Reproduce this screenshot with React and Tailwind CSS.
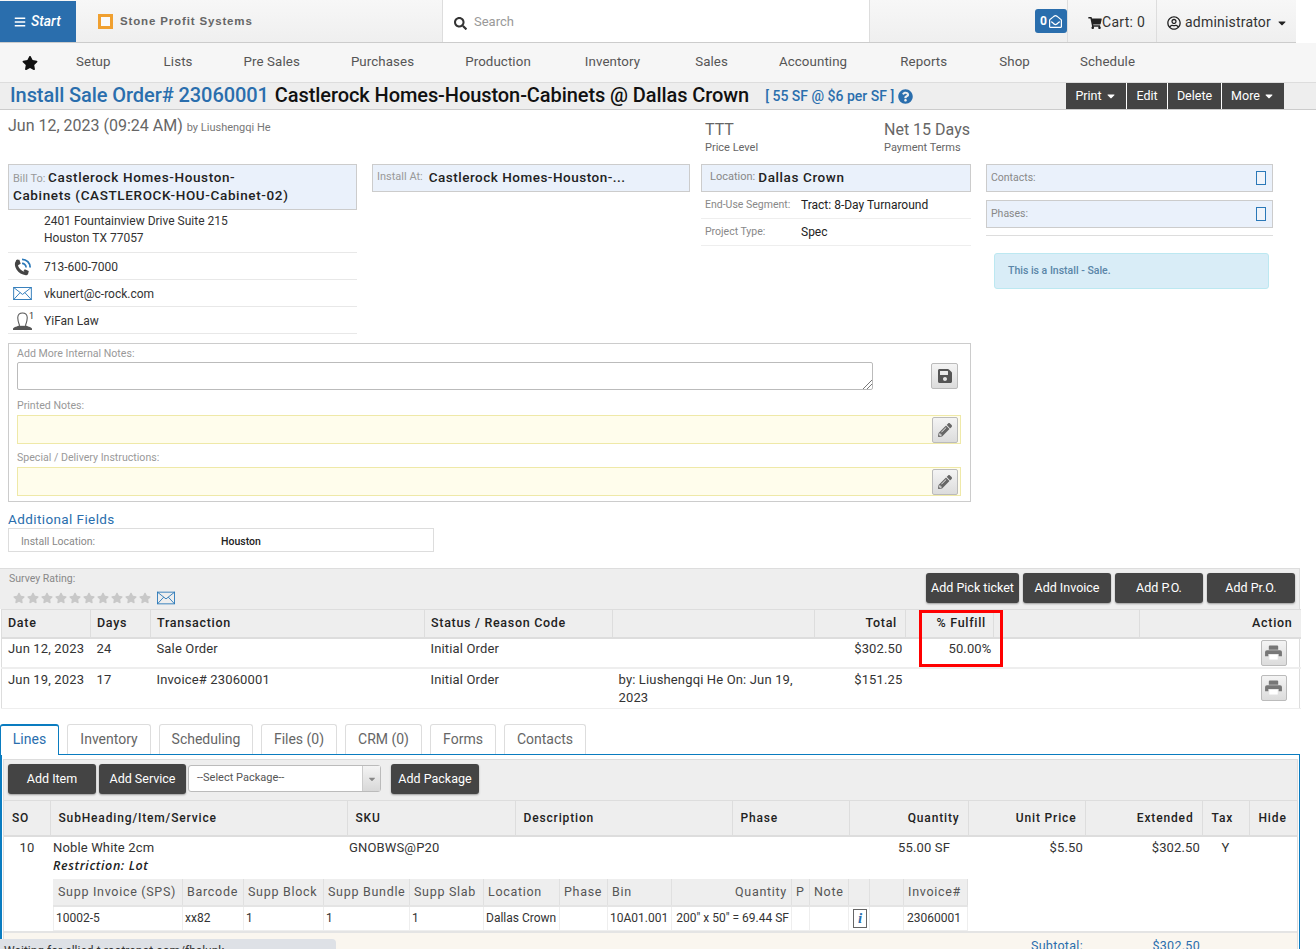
import React from "react";
import { FaBars, FaStar, FaSearch, FaShoppingCart, FaRegUserCircle, FaCaretDown, FaQuestionCircle, FaSave, FaPencilAlt, FaRegEnvelopeOpen } from "react-icons/fa";

const Mail = ({ className }) => (
  <svg viewBox="0 0 20 14" className={className} fill="none" stroke="#2a78b8" strokeWidth="1">
    <rect x="0.5" y="0.5" width="19" height="13" />
    <path d="M0.5 0.5 L10 8 L19.5 0.5 M0.5 13.5 L7.5 6 M19.5 13.5 L12.5 6" />
  </svg>
);

const Person = () => (
  <svg viewBox="0 0 20 19" className="w-[19px] h-[18px]">
    <path d="M0 19 L0 17.5 C1 15.5 5 15.5 6.5 14 L13.5 14 C15 15.5 19 15.5 20 17.5 L20 19 Z" fill="#555" />
    <path d="M7 14.5 C6 11.5 5 9.5 5 6 C5 2.5 7 1 10 1 C13 1 15 2.5 15 6 C15 9.5 14 11.5 13 14.5" fill="#fff" stroke="#555" strokeWidth="1.1" />
  </svg>
);

const Phone = () => (
  <svg viewBox="0 0 20 20" className="w-[19px] h-[18px]" fill="none">
    <path d="M4.5 3.5 C1 9 6 16.5 14 17.5" stroke="#444" strokeWidth="3.4" strokeLinecap="round" />
    <path d="M3 2.5 L6.5 2 L8 6.5 L5 8 Z M11 14.5 L12.5 12.5 L17 14.5 L16 18.5 Z" fill="#444" />
    <path d="M9.5 6 A4.5 4.5 0 0 1 14 10.5" stroke="#2a78b8" strokeWidth="1.8" />
    <path d="M9.5 1.5 A9 9 0 0 1 18.5 10.5" stroke="#2a78b8" strokeWidth="2" />
  </svg>
);

const Printer = () => (
  <svg viewBox="0 0 18 16" className="w-[17px] h-[15px]">
    <path d="M4 1.5 Q4 0.5 5 0.5 L13 0.5 Q14 0.5 14 1.5 L14 5 L4 5 Z" fill="#777" />
    <path d="M2 5.5 L16 5.5 Q18 5.5 18 7.5 L18 12 L14.5 12 L14.5 9.5 L3.5 9.5 L3.5 12 L0 12 L0 7.5 Q0 5.5 2 5.5 Z" fill="#777" />
    <rect x="4.5" y="10.5" width="9" height="5" fill="#fff" />
  </svg>
);

const Nav = ({ children, className = "" }) => <span className={"pl-[26px] text-[13.3px] tracking-[0.1px] text-[#555] " + className}>{children}</span>;
const DarkBtn = ({ children, className }) => (
  <button className={"bg-[#444] text-white text-[12.5px] rounded-[3px] flex items-center justify-center shadow-[0_1px_2px_rgba(0,0,0,0.35)] " + className}>{children}</button>
);
const GreyBtn = ({ children, className }) => (
  <button className={"bg-gradient-to-b from-[#f4f4f4] to-[#dcdcdc] border border-[#bbb] rounded-[2px] flex items-center justify-center text-[#666] " + className}>{children}</button>
);
const Tab = ({ children, className, active }) => (
  <div className={(active ? "h-[31px] pb-[2px] bg-white border border-[#0a7cc0] border-t-2 border-b-0 text-[#2a6ead] " : "h-[30px] border border-[#ddd] border-b-0 text-[#666] ") + "rounded-t-[3px] text-[14px] flex items-center justify-center " + className}>{children}</div>
);
const ContactRow = ({ icon, children }) => (
  <div className="h-[27px] border-b border-[#e8e8e8] flex items-center pt-[1px] text-[12px] text-[#333]">
    <div className="w-[36px] pl-[5px] flex items-center">{icon}</div>{children}
  </div>
);
const Th = ({ children, className = "" }) => (
  <th className={"border-r border-[#ddd] font-medium text-[12.5px] tracking-[0.7px] text-[#222] text-left px-[6px] " + className}>{children}</th>
);
const Lh = ({ children, className = "" }) => (
  <th className={"border-r border-[#ddd] font-medium text-[12px] tracking-[0.85px] text-[#222] text-left " + className}>{children}</th>
);
const Sh = ({ children, className = "" }) => (
  <th className={"border-r border-[#e0e0e0] font-normal text-[12.5px] tracking-[0.7px] text-[#555] text-left px-[4px] whitespace-nowrap " + className}>{children}</th>
);
const Sd = ({ children, className = "" }) => (
  <td className={"border-r border-[#eee] text-[12px] tracking-normal text-[#333] px-[2px] whitespace-nowrap " + className}>{children}</td>
);

export default function App() {
  return (
    <div className="relative h-[949px] w-[1316px] overflow-hidden bg-white font-['Roboto',sans-serif] text-[#333]">
      {/* top bar */}
      <div className="h-[43px] flex border-b border-[#ccc] bg-gradient-to-b from-[#f7f7f7] to-[#efefef] w-[1296px]">
        <div className="w-[76px] mt-px bg-[#2a6ead] text-white flex items-center pl-[14px] gap-[5px] text-[14px]">
          <FaBars className="w-[12px] h-[12px]" />
          <span className="italic font-medium">Start</span>
        </div>
        <div className="w-[367px] border-r border-[#ddd] flex items-center pl-[22px]">
          <div className="w-[15px] h-[15px] border-[3px] border-[#f0a030] bg-[#fafafa]" />
          <span className="ml-[7px] pt-px font-['Liberation_Sans',sans-serif] font-bold text-[11.5px] tracking-[0.85px] text-[#666]">Stone Profit Systems</span>
        </div>
        <div className="w-[427px] bg-white flex items-center pl-[11px] pt-px border-r border-[#ddd] text-[13px] text-[#999]">
          <FaSearch className="w-[13px] h-[13px] text-[#333] mr-[7px] mt-[3px]" />Search
        </div>
        <div className="w-[165px]" />
        <div className="w-[32px] flex items-center">
          <div className="w-[32px] h-[24px] rounded-[3px] bg-[#2a6ead] text-white flex items-center justify-center gap-[2px] text-[12px] font-bold">
            0<FaRegEnvelopeOpen className="w-[13px] h-[13px]" />
          </div>
        </div>
        <div className="w-[90px] border-l border-r border-[#ddd] flex items-center pl-[20px] pt-[3px] text-[14px] tracking-[0.3px] text-[#333]">
          <FaShoppingCart className="w-[14px] h-[12px] text-[#222]" />Cart: 0
        </div>
        <div className="flex-1 flex items-center pl-[10px] pt-[3px] text-[14px] tracking-[0.2px] text-[#333]">
          <FaRegUserCircle className="w-[14px] h-[14px] text-[#222] mr-[4px]" />administrator
          <FaCaretDown className="w-[12px] h-[12px] text-[#222] ml-[5px]" />
        </div>
      </div>
      {/* nav */}
      <div className="h-[40px] flex items-center bg-[#f6f6f6] border-b border-[#ddd]">
        <FaStar className="ml-[22px] mr-[12px] w-[16px] h-[16px] text-[#111]" />
        <div className="flex items-center pb-[2px]">
          <Nav className="pr-[27px]">Setup</Nav><Nav className="pr-[25px]">Lists</Nav><Nav className="pr-[25px]">Pre Sales</Nav><Nav className="pr-[25px]">Purchases</Nav><Nav className="pr-[28px]">Production</Nav><Nav className="pr-[29px]">Inventory</Nav><Nav className="pr-[25px]">Sales</Nav><Nav className="pr-[27px]">Accounting</Nav><Nav className="pr-[26px]">Reports</Nav><Nav className="pr-[24px]">Shop</Nav><Nav className="pr-[26px]">Schedule</Nav>
        </div>
      </div>
      {/* title */}
      <div className="h-[27px] flex items-center bg-[#eee] border-b border-[#ccc] pl-[10px]">
        <span className="text-[20px] pb-[2px] font-medium tracking-[-0.08px] text-[#2a6ead]">Install Sale Order# 23060001</span>
        <span className="ml-[6px] text-[20px] pb-[2px] font-medium tracking-[-0.08px] text-[#111]">Castlerock Homes-Houston-Cabinets @ Dallas Crown</span>
        <span className="ml-[16px] text-[14px] font-medium text-[#2a6ead]">[ 55 SF @ $6 per SF ]</span>
        <FaQuestionCircle className="ml-[4px] w-[15px] h-[15px] text-[#2a6ead]" />
        <div className="ml-auto mr-[32px] h-[26px] flex text-white text-[12.5px]">
          <div className="w-[61px] bg-[#444] flex items-center justify-center gap-[3px] border-r border-white">Print <FaCaretDown className="w-[12px] h-[12px]" /></div>
          <div className="w-[41px] bg-[#444] flex items-center justify-center border-r border-white">Edit</div>
          <div className="w-[54px] bg-[#444] flex items-center justify-center border-r border-white">Delete</div>
          <div className="w-[62px] bg-[#444] flex items-center justify-center gap-[3px]">More <FaCaretDown className="w-[12px] h-[12px]" /></div>
        </div>
      </div>
      {/* header info */}
      <div className="h-[54px] flex pl-[8px]">
        <div className="w-[697px] pt-[6px] text-[16px] text-[#666] leading-[19px]">Jun 12, 2023 (09:24 AM) <span className="text-[11px] text-[#777]">by Liushengqi He</span></div>
        <div className="w-[179px] pt-[10px]">
          <div className="text-[16px] text-[#666] leading-[19px]">TTT</div>
          <div className="text-[11px] text-[#666] leading-[18px]">Price Level</div>
        </div>
        <div className="pt-[10px]">
          <div className="text-[16px] text-[#666] leading-[19px]">Net 15 Days</div>
          <div className="text-[11px] text-[#666] leading-[18px]">Payment Terms</div>
        </div>
      </div>
      {/* columns */}
      <div className="h-[179px] flex pl-[8px]">
        <div className="w-[349px]">
          <div className="h-[46px] bg-[#eaf1fb] border border-[#ccc] px-[4px] pt-[3px] text-[13.5px] leading-[18px] font-medium tracking-[0.63px] text-[#222]">
            <span className="text-[11px] leading-none font-normal tracking-normal text-[#999]">Bill To: </span>Castlerock Homes-Houston-<br />Cabinets (CASTLEROCK-HOU-Cabinet-02)
          </div>
          <div className="h-[43px] border-b border-[#e8e8e8] pl-[36px] pt-[3px] text-[12px] leading-[17px] text-[#333]">2401 Fountainview Drive Suite 215<br />Houston TX 77057</div>
          <ContactRow icon={<Phone />}>713-600-7000</ContactRow>
          <ContactRow icon={<Mail className="w-[19px] h-[13px]" />}>vkunert@c-rock.com</ContactRow>
          <ContactRow icon={<span className="flex items-start"><Person /><span className="text-[9px] leading-[9px] -ml-[3px]">1</span></span>}>YiFan Law</ContactRow>
        </div>
        <div className="w-[318px] ml-[15px]">
          <div className="h-[28px] bg-[#eaf1fb] border border-[#ccc] px-[4px] pb-px flex items-center text-[13.5px] font-medium tracking-[0.5px] text-[#222]">
            <span className="text-[11px] font-normal tracking-normal text-[#999] mr-[6px]">Install At:</span>Castlerock Homes-Houston-...
          </div>
        </div>
        <div className="w-[270px] ml-[11px]">
          <div className="h-[28px] bg-[#eaf1fb] border border-[#ccc] pl-[8px] pb-px flex items-center text-[13.5px] font-medium tracking-[0.6px] text-[#222]">
            <span className="text-[11px] font-normal tracking-normal text-[#888] mr-[3px]">Location:</span>Dallas Crown
          </div>
          <div className="h-[27px] border-b border-[#eee] flex items-center text-[12px] pl-[4px]"><span className="w-[96px] text-[10.5px] text-[#888]">End-Use Segment:</span><span className="text-[#222]">Tract: 8-Day Turnaround</span></div>
          <div className="h-[27px] border-b border-[#eee] flex items-center text-[12px] pl-[4px]"><span className="w-[96px] text-[10.5px] text-[#888]">Project Type:</span><span className="text-[#222]">Spec</span></div>
        </div>
        <div className="w-[287px] ml-[15px]">
          <div className="h-[28px] bg-[#eaf1fb] border border-[#ccc] px-[4px] flex items-center justify-between text-[10.5px] text-[#888]">Contacts:<span className="w-[10px] h-[14px] mr-[2px] border border-[#2a78b8] bg-[#f0f4fa]" /></div>
          <div className="h-[28px] mt-[8px] bg-[#eaf1fb] border border-[#ccc] px-[4px] flex items-center justify-between text-[10.5px] text-[#888]">Phases:<span className="w-[10px] h-[14px] mr-[2px] border border-[#2a78b8] bg-[#f0f4fa]" /></div>
          <div className="h-[8px] border-b border-[#ddd]" />
          <div className="w-[275px] h-[36px] mt-[17px] ml-[8px] bg-[#d9edf7] border border-[#bce8f1] rounded-[3px] pl-[13px] flex items-center text-[10.5px] font-medium text-[#5a86a8]">This is a Install - Sale.</div>
        </div>
      </div>
      {/* notes */}
      <div className="ml-[8px] w-[963px] h-[159px] border border-[#ccc] px-[8px] pt-[2px] text-[#999] text-[10.6px]">
        <div className="leading-[15px]">Add More Internal Notes:</div>
        <div className="flex mt-[1px]">
          <div className="relative w-[856px] h-[28px] border border-[#bbb] rounded-[2px] bg-white">
            <svg viewBox="0 0 10 10" className="absolute right-0 bottom-0 w-[10px] h-[10px]" stroke="#555" strokeWidth="0.8"><path d="M1 10 L10 1 M5 10 L10 5" /></svg>
          </div>
          <GreyBtn className="w-[27px] h-[26px] ml-[58px] mt-px"><FaSave className="w-[16px] h-[16px] text-[#555]" /></GreyBtn>
        </div>
        <div className="leading-[15px] mt-[8px]">Printed Notes:</div>
        <div className="w-[944px] h-[29px] mt-[2px] bg-[#fffdec] border border-[#efe9a8] flex justify-end items-center pr-[2px]">
          <GreyBtn className="w-[26px] h-[26px]"><FaPencilAlt className="w-[14px] h-[14px]" /></GreyBtn>
        </div>
        <div className="leading-[15px] mt-[6px]">Special / Delivery Instructions:</div>
        <div className="w-[944px] h-[29px] mt-[2px] bg-[#fffdec] border border-[#efe9a8] flex justify-end items-center pr-[2px]">
          <GreyBtn className="w-[26px] h-[26px]"><FaPencilAlt className="w-[14px] h-[14px]" /></GreyBtn>
        </div>
      </div>
      {/* additional */}
      <div className="ml-[8px] mt-[9px] text-[13.5px] tracking-[0.4px] leading-[17px] text-[#2a6ead]">Additional Fields</div>
      <div className="ml-[8px] w-[426px] h-[24px] border border-[#ddd] flex items-center pl-[12px] pt-[3px] text-[10.5px]">
        <span className="w-[200px] text-[#888]">Install Location:</span><span className="font-medium text-[#222]">Houston</span>
      </div>
      {/* survey */}
      <div className="mt-[16px] w-[1300px] h-[141px] border-r border-[#ddd]">
        <div className="h-[41px] bg-[#eee] border-t border-[#ddd] flex pl-[9px] pr-[4px]">
          <div className="flex-1 pt-[3px]">
            <div className="text-[10.5px] leading-[13px] text-[#888]">Survey Rating:</div>
            <div className="flex items-center gap-[2px] mt-[6px] pl-[4px]">
              {[0,1,2,3,4,5,6,7,8,9].map(i => <FaStar key={i} className="w-[12px] h-[12px] text-[#c8c8c8]" />)}
              <Mail className="w-[18px] h-[14px] ml-[4px]" />
            </div>
          </div>
          <div className="flex gap-[4px] pt-[4px] h-[34px] box-content">
            <DarkBtn className="w-[93px] h-[30px]">Add Pick ticket</DarkBtn>
            <DarkBtn className="w-[88px] h-[30px]">Add Invoice</DarkBtn>
            <DarkBtn className="w-[88px] h-[30px]">Add P.O.</DarkBtn>
            <DarkBtn className="w-[88px] h-[30px]">Add Pr.O.</DarkBtn>
          </div>
        </div>
        <table className="table-fixed w-[1299px] ml-px border-l border-[#ddd]">
          <colgroup>
            <col className="w-[89px]" /><col className="w-[60px]" /><col className="w-[274px]" /><col className="w-[188px]" /><col className="w-[202px]" /><col className="w-[91px]" /><col className="w-[88px]" /><col className="w-[146px]" /><col className="w-[161px]" />
          </colgroup>
          <thead>
            <tr className="h-[28px] bg-[#eee] border-t border-b-2 border-[#ddd]">
              <Th>Date</Th><Th>Days</Th><Th>Transaction</Th><Th>Status / Reason Code</Th><Th></Th><Th className="text-right pr-[8px]">Total</Th><Th className="text-right pr-[7px]">% Fulfill</Th><Th></Th><Th className="text-right pr-[8px] border-r-0">Action</Th>
            </tr>
          </thead>
          <tbody className="text-[13px] tracking-[0.15px] text-[#333] align-top">
            <tr className="h-[30px] border-b-2 border-[#eee]">
              <td className="pl-[6px]">Jun 12, 2023</td><td className="pl-[6px]">24</td><td className="pl-[6px]">Sale Order</td><td className="pl-[6px]">Initial Order</td><td></td><td className="text-right pr-[3px]">$302.50</td><td className="text-right pr-[2px]">50.00%</td><td></td>
              <td className="pt-[1px]"><GreyBtn className="ml-auto mr-[14px] w-[26px] h-[26px] rounded-[2px]"><Printer /></GreyBtn></td>
            </tr>
            <tr className="h-[41px] border-b border-[#eee] leading-[18px]">
              <td className="pl-[6px] pt-[2px]">Jun 19, 2023</td><td className="pl-[6px] pt-[2px]">17</td><td className="pl-[6px] pt-[2px]">Invoice# 23060001</td><td className="pl-[6px] pt-[2px]">Initial Order</td><td className="pl-[6px] pt-[2px]">by: Liushengqi He On: Jun 19, 2023</td><td className="text-right pr-[3px] pt-[2px]">$151.25</td><td></td><td></td>
              <td className="pt-[6px]"><GreyBtn className="ml-auto mr-[14px] w-[26px] h-[26px] rounded-[2px]"><Printer /></GreyBtn></td>
            </tr>
          </tbody>
        </table>
      </div>
      {/* red highlight */}
      <div className="absolute left-[919px] top-[610px] w-[84px] h-[57px] border-[3px] border-[#f00]" />
      {/* tabs */}
      <div className="mt-[15px] flex h-[30px] relative z-10">
        <Tab active className="w-[59px]">Lines</Tab>
        <Tab className="w-[84px] ml-[8px]">Inventory</Tab>
        <Tab className="w-[94px] ml-[8px]">Scheduling</Tab>
        <Tab className="w-[76px] ml-[8px]">Files (0)</Tab>
        <Tab className="w-[77px] ml-[8px]">CRM (0)</Tab>
        <Tab className="w-[66px] ml-[8px]">Forms</Tab>
        <Tab className="w-[82px] ml-[8px]">Contacts</Tab>
      </div>
      {/* panel */}
      <div className="w-[1300px] border-t border-l-2 border-r border-[#0a7cc0] h-[300px] pt-[4px] pl-px pr-[1px]">
        <div className="border border-[#ddd] border-b-0">
          <div className="h-[40px] bg-[#eee] flex items-start pt-[4px] pl-[4px]">
            <DarkBtn className="w-[88px] h-[30px]">Add Item</DarkBtn>
            <DarkBtn className="w-[87px] h-[30px] ml-[3px]">Add Service</DarkBtn>
            <div className="w-[193px] h-[27px] mt-px ml-[2px] bg-white border border-[#bbb] rounded-[3px] flex text-[11px] text-[#555]">
              <span className="flex-1 pl-[8px] leading-[23px]">--Select Package--</span>
              <span className="w-[18px] bg-gradient-to-b from-[#f4f4f4] to-[#d8d8d8] border-l border-[#ccc] flex items-center justify-center text-[#888]"><FaCaretDown className="w-[10px] h-[10px]" /></span>
            </div>
            <DarkBtn className="w-[88px] h-[30px] ml-[10px]">Add Package</DarkBtn>
          </div>
          <table className="table-fixed w-[1293px]">
            <colgroup>
              <col className="w-[46px]" /><col className="w-[297px]" /><col className="w-[168px]" /><col className="w-[217px]" /><col className="w-[117px]" /><col className="w-[119px]" /><col className="w-[117px]" /><col className="w-[117px]" /><col className="w-[47px]" /><col className="w-[48px]" />
            </colgroup>
            <thead>
              <tr className="h-[35px] bg-[#eee] border-t border-b-2 border-[#ddd]">
                <Lh className="pl-[8px]">SO</Lh><Lh className="pl-[8px]">SubHeading/Item/Service</Lh><Lh className="pl-[8px]">SKU</Lh><Lh className="pl-[8px]">Description</Lh><Lh className="pl-[8px]">Phase</Lh><Lh className="text-right pr-[8px]">Quantity</Lh><Lh className="text-right pr-[8px]">Unit Price</Lh><Lh className="text-right pr-[8px]">Extended</Lh><Lh className="pl-[9px]">Tax</Lh><Lh className="pl-[9px] border-r-0">Hide</Lh>
              </tr>
            </thead>
            <tbody className="text-[13px] leading-[18px] tracking-[0.15px] text-[#333] align-top">
              <tr className="h-[43px]">
                <td className="text-center pt-[2px]">10</td>
                <td className="pl-[3px] pt-[2px]">Noble White 2cm<br /><span className="font-['Open_Sans',sans-serif] italic font-semibold text-[12.5px] tracking-[0.6px] text-[#222]">Restriction: Lot</span></td>
                <td className="pl-[2px] pt-[2px]">GNOBWS@P20</td><td></td><td></td>
                <td className="text-right pr-[18px] pt-[2px]">55.00 SF</td>
                <td className="text-right pr-[2px] pt-[2px]">$5.50</td>
                <td className="text-right pr-[2px] pt-[2px]">$302.50</td>
                <td className="text-center pt-[2px]">Y</td><td></td>
              </tr>
              <tr className="border-b-2 border-[#e4e4e4]">
                <td colSpan={10} className="pl-[49px]">
                  <table className="table-fixed w-[914px] border-l border-[#eee]">
                    <colgroup>
                      <col className="w-[129px]" /><col className="w-[61px]" /><col className="w-[80px]" /><col className="w-[86px]" /><col className="w-[74px]" /><col className="w-[76px]" /><col className="w-[48px]" /><col className="w-[64px]" /><col className="w-[120px]" /><col className="w-[18px]" /><col className="w-[39px]" /><col className="w-[21px]" /><col className="w-[34px]" /><col className="w-[64px]" />
                    </colgroup>
                    <thead>
                      <tr className="h-[27px] bg-[#eee] border-b-2 border-[#e4e4e4]">
                        <Sh>Supp Invoice (SPS)</Sh><Sh>Barcode</Sh><Sh className="px-[3px]">Supp Block</Sh><Sh className="px-[3px]">Supp Bundle</Sh><Sh className="px-[3px]">Supp Slab</Sh><Sh className="px-[3px]">Location</Sh><Sh>Phase</Sh><Sh>Bin</Sh><Sh className="text-right">Quantity</Sh><Sh className="text-center px-0">P</Sh><Sh>Note</Sh><Sh></Sh><Sh></Sh><Sh className="text-right pr-[6px] px-0">Invoice#</Sh>
                      </tr>
                    </thead>
                    <tbody>
                      <tr className="h-[25px] border-b border-[#eee] align-middle">
                        <Sd>10002-5</Sd><Sd>xx82</Sd><Sd>1</Sd><Sd>1</Sd><Sd>1</Sd><Sd>Dallas Crown</Sd><Sd></Sd><Sd>10A01.001</Sd><Sd className="text-right">200" x 50" = 69.44 SF</Sd><Sd></Sd><Sd></Sd>
                        <Sd><span className="block relative w-[14px] h-[19px] ml-[2px] border border-[#666] text-[#2a6ead] font-['Liberation_Serif',serif] italic font-bold text-[15px] leading-[17px] text-center">i</span></Sd>
                        <Sd></Sd><Sd className="text-left pl-[3px]">23060001</Sd>
                      </tr>
                    </tbody>
                  </table>
                </td>
              </tr>
            </tbody>
          </table>
          <div className="h-[30px] bg-[#faf6ef] flex text-[12.5px] tracking-[0.3px] text-[#2a6ead] pt-[4px]">
            <span className="w-[1079px] text-right">Subtotal:</span>
            <span className="w-[117px] text-right">$302.50</span>
          </div>
        </div>
      </div>
      {/* browser status bubble */}
      <div className="absolute left-0 top-[939px] w-[336px] h-[24px] bg-[#dee1e6] rounded-tr-[4px] pl-[4px] pt-[5px] text-[12px] leading-[14px] text-[#333] overflow-hidden whitespace-nowrap">Waiting for allied.t.rootrepot.com/fbclunk...</div>
    </div>
  );
}
